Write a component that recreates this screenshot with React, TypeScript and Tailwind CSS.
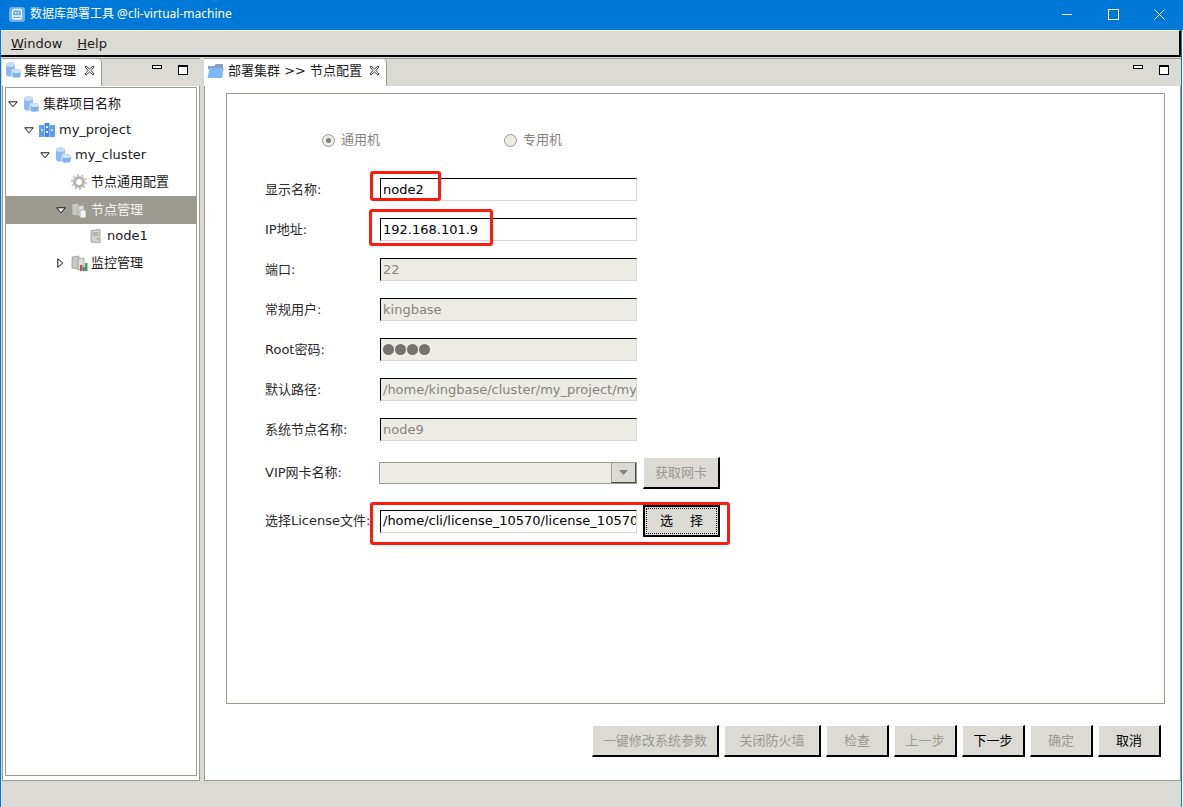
import React from 'react';

const cjk = "font-['DejaVu_Sans','Noto_Sans_CJK_SC',sans-serif]";

const AppIcon = () => (
  <svg width="16" height="15" viewBox="0 0 16 15" className="shrink-0">
    <rect x="0" y="0" width="16" height="15" rx="3" fill="#6db0f2" />
    <rect x="3.5" y="2.5" width="9" height="9.5" rx="2" fill="none" stroke="#fff" strokeWidth="1.3" />
    <rect x="6" y="5" width="1.2" height="1.2" fill="#fff" />
    <rect x="8.8" y="5" width="1.2" height="1.2" fill="#fff" />
    <path d="M3.5 9 H12.5" stroke="#fff" strokeWidth="1.2" />
  </svg>
);

const DbIcon = () => (
  <svg width="17" height="17" viewBox="0 0 17 17" className="shrink-0">
    <rect x="1" y="0.5" width="9" height="14" rx="3" fill="#8db9ee" />
    <ellipse cx="5.5" cy="2.8" rx="4.5" ry="2.2" fill="#c4dcf8" />
    <rect x="7" y="7" width="9" height="9" rx="2.5" fill="#7fb3ee" stroke="#fff" strokeWidth="0.7" />
    <ellipse cx="11.5" cy="9.2" rx="4" ry="1.8" fill="#d6e7fb" />
  </svg>
);

const ProjectIcon = () => (
  <svg width="16" height="16" viewBox="0 0 16 16" className="shrink-0">
    <rect x="0" y="3" width="5" height="12" fill="#5b9ff0" />
    <rect x="5.5" y="1" width="5" height="14" fill="#3f88e6" />
    <rect x="11" y="3" width="5" height="12" fill="#5b9ff0" />
    <rect x="7" y="4" width="2" height="2" fill="#e6f0fc" />
    <rect x="7" y="9" width="2" height="2" fill="#e6f0fc" />
    <rect x="2" y="7" width="1.5" height="2" fill="#e6f0fc" />
    <rect x="12.5" y="7" width="1.5" height="2" fill="#e6f0fc" />
  </svg>
);

const GearIcon = () => (
  <svg width="16" height="16" viewBox="0 0 16 16" className="shrink-0">
    <circle cx="8" cy="8" r="4.5" fill="none" stroke="#b5b5b1" strokeWidth="3" />
    <circle cx="8" cy="8" r="7" fill="none" stroke="#c6c6c2" strokeWidth="2" strokeDasharray="2.2 2.2" />
  </svg>
);

const ServerIcon = () => (
  <svg width="13" height="15" viewBox="0 0 13 15" className="shrink-0">
    <path d="M2 1.5 L11 0.5 V14 L2 13 Z" fill="#d2d2ce" stroke="#9a9a96" strokeWidth="0.8" />
    <path d="M3.5 4 H9.5 M3.5 6 H9.5" stroke="#8a8a84" strokeWidth="0.8" />
    <rect x="8" y="9" width="1.5" height="1.5" fill="#4caf50" />
  </svg>
);

const ServersIcon = ({ chart }: { chart?: boolean }) => (
  <svg width="17" height="17" viewBox="0 0 17 17" className="shrink-0">
    <path d="M1 2 L8 1 V14 L1 13 Z" fill="#c8c8c4" stroke="#96968f" strokeWidth="0.7" />
    <path d="M7 4 L13 3 V13 L7 15 Z" fill="#dcdcd8" stroke="#96968f" strokeWidth="0.7" />
    {chart ? (
      <>
        <rect x="9" y="10" width="2.5" height="6" fill="#d9463e" />
        <rect x="11.5" y="12" width="2.5" height="4" fill="#3f88e6" />
        <rect x="14" y="8" width="2.5" height="8" fill="#43a047" />
      </>
    ) : (
      <rect x="9" y="8" width="6" height="8" fill="#f3f3f1" stroke="#96968f" strokeWidth="0.7" />
    )}
  </svg>
);

const FolderIcon = () => (
  <svg width="17" height="16" viewBox="0 0 17 16" className="shrink-0">
    <path d="M1 3 H7 L9 1 H16 V6 H1 Z" fill="#7f9fc4" />
    <path d="M0.5 15 L2.5 5 H16.8 L15 15 Z" fill="#7db8f8" />
  </svg>
);

const ArrowDown = () => (
  <svg width="10" height="7" viewBox="0 0 10 7" className="shrink-0">
    <path d="M0.8 0.8 H9.2 L5 5.8 Z" fill="#fff" stroke="#111" strokeWidth="1" />
  </svg>
);

const ArrowRight = () => (
  <svg width="7" height="10" viewBox="0 0 7 10" className="shrink-0">
    <path d="M0.8 0.8 V9.2 L5.8 5 Z" fill="#fff" stroke="#111" strokeWidth="1" />
  </svg>
);

const TabClose = () => (
  <svg width="11" height="11" viewBox="0 0 11 11" className="shrink-0">
    <path d="M1 2 L2 1 L5.5 4 L9 1 L10 2 L7 5.5 L10 9 L9 10 L5.5 7 L2 10 L1 9 L4 5.5 Z" fill="#fff" stroke="#222" strokeWidth="0.9" />
  </svg>
);

const ViewButtons = () => (
  <div className="mb-[5px] flex items-start gap-[16px]">
    <div className="h-[4px] w-[10px] border border-black bg-white" />
    <div className="h-[10px] w-[10px] border border-black border-t-2 bg-white" />
  </div>
);

const TreeRow = ({ indent, h, toggle, icon, label, selected }: { indent: string; h: string; toggle?: React.ReactNode; icon: React.ReactNode; label: string; selected?: boolean }) => (
  <div className={`flex ${h} items-center ${indent} ${selected ? 'bg-[#9d9a92] text-[#f4f4f2]' : 'text-[#1a1a1a]'}`}>
    <div className="flex w-[15px] shrink-0 items-center justify-center pr-[2px]">{toggle}</div>
    <div className="flex w-[20px] shrink-0 items-center justify-center">{icon}</div>
    <span className="ml-[2px] whitespace-nowrap">{label}</span>
  </div>
);

const Field = ({ label, value, on, password }: { label: string; value?: string; on?: boolean; password?: boolean }) => (
  <div className="mb-[17px] flex items-center">
    <span className="w-[115px] shrink-0 whitespace-nowrap text-[#2a2a2a]">{label}</span>
    <div className={`flex h-[23px] w-[257px] items-center overflow-hidden border border-t-black border-l-black border-r-[#d6d4ce] border-b-[#d6d4ce] pl-[2px] ${on ? 'bg-white text-black' : 'bg-[#edebe6] text-[#85837d]'}`}>
      {password ? (
        <div className="flex gap-[1px]">
          <span className="h-[11px] w-[11px] rounded-full bg-[#747370]" />
          <span className="h-[11px] w-[11px] rounded-full bg-[#747370]" />
          <span className="h-[11px] w-[11px] rounded-full bg-[#747370]" />
          <span className="h-[11px] w-[11px] rounded-full bg-[#747370]" />
        </div>
      ) : (
        <span className="whitespace-nowrap">{value}</span>
      )}
    </div>
  </div>
);

const BarButton = ({ children, on, w }: { children: React.ReactNode; on?: boolean; w: string }) => (
  <div className={`flex h-[32px] ${w} items-center justify-center border-r-2 border-b-2 border-r-black border-b-black border-t border-l border-t-white border-l-white bg-[#dcdad5] ${on ? 'text-black' : 'text-[#9a9892]'}`}>
    {children}
  </div>
);

const Radio = ({ checked, label, w }: { checked?: boolean; label: string; w: string }) => (
  <div className={`flex items-center ${w}`}>
    <div className="flex h-[13px] w-[13px] items-center justify-center rounded-full border border-[#9a9892] bg-[#edebe6]">
      {checked && <div className="h-[5px] w-[5px] rounded-full bg-[#85837d]" />}
    </div>
    <span className="ml-[6px] text-[#85837d]">{label}</span>
  </div>
);

const RedBox = ({ className }: { className: string }) => (
  <div className={`pointer-events-none absolute rounded-[3px] border-[3px] border-[#fb1c10] ${className}`} />
);

export default function App() {
  return (
    <div className={`flex h-[807px] w-[1183px] flex-col overflow-hidden bg-white text-[13px] ${cjk}`}>
      {/* title bar */}
      <div className="flex h-[30px] shrink-0 items-center bg-[#0078d7] pb-[2px] pl-[9px] pr-[1px] text-white">
        <AppIcon />
        <span className="ml-[5px] whitespace-nowrap font-['Noto_Sans','Noto_Sans_CJK_SC',sans-serif] text-[12px]">数据库部署工具 @cli-virtual-machine</span>
        <div className="ml-auto flex items-center">
          <div className="flex w-[46px] justify-center"><div className="h-px w-[10px] bg-white" /></div>
          <div className="flex w-[46px] justify-center"><div className="h-[11px] w-[11px] border border-white" /></div>
          <div className="flex w-[46px] justify-center">
            <svg width="11" height="11" viewBox="0 0 11 11"><path d="M0.5 0.5 L10.5 10.5 M10.5 0.5 L0.5 10.5" stroke="#fff" strokeWidth="1" /></svg>
          </div>
        </div>
      </div>

      <div className="mr-[1px] flex min-h-0 flex-1 flex-col border-x border-[#0078d7] bg-[#dcdad5]">
        {/* menu bar */}
        <div className="flex h-[27px] shrink-0 items-center gap-[15px] border-t border-white border-b-2 border-b-black border-r-2 border-r-black pl-[10px] pt-[1px] text-[#1a1a1a]">
          <span><span className="underline">W</span>indow</span>
          <span><span className="underline">H</span>elp</span>
        </div>

        {/* panels */}
        <div className="flex min-h-0 flex-1 pl-[1px] pt-[1px]">
          {/* left view */}
          <div className="flex w-[198px] shrink-0 flex-col">
            <div className="flex h-[28px] shrink-0 items-center border-t border-t-[#9d9a92]">
              <div className="flex h-[28px] w-[100px] items-center rounded-tr-[4px] border-r border-[#9d9a92] bg-white pb-[4px] pl-[3px]">
                <DbIcon />
                <span className="ml-[2px] whitespace-nowrap text-[#1a1a1a]">集群管理</span>
                <span className="ml-[8px]"><TabClose /></span>
              </div>
              <div className="ml-[50px]"><ViewButtons /></div>
            </div>
            <div className="flex min-h-0 flex-1 flex-col border-x border-b border-[#9d9a92] bg-white px-[2px] pb-[4px] pt-[1px]">
              <div className="flex-1 border border-[#9d9a92] pt-[3px]">
                <TreeRow h="h-[26px]" indent="pl-0" toggle={<ArrowDown />} icon={<DbIcon />} label="集群项目名称" />
                <TreeRow h="h-[26px]" indent="pl-[16px]" toggle={<ArrowDown />} icon={<ProjectIcon />} label="my_project" />
                <TreeRow h="h-[25px]" indent="pl-[32px] pb-[1px]" toggle={<ArrowDown />} icon={<DbIcon />} label="my_cluster" />
                <TreeRow h="h-[28px]" indent="pl-[48px]" icon={<GearIcon />} label="节点通用配置" />
                <TreeRow h="h-[28px]" indent="pl-[48px]" toggle={<ArrowDown />} icon={<ServersIcon />} label="节点管理" selected />
                <TreeRow h="h-[26px]" indent="pl-[64px] pb-[2px]" icon={<ServerIcon />} label="node1" />
                <TreeRow h="h-[28px]" indent="pl-[48px] pb-[2px]" toggle={<ArrowRight />} icon={<ServersIcon chart />} label="监控管理" />
              </div>
            </div>
          </div>

          {/* editor */}
          <div className="ml-[4px] flex min-w-0 flex-1 flex-col">
            <div className="flex h-[28px] shrink-0 items-center justify-between border-t border-t-[#9d9a92] pr-[12px]">
              <div className="flex h-[28px] w-[183px] items-center rounded-tr-[4px] border-r border-[#9d9a92] bg-white pb-[4px] pl-[3px]">
                <FolderIcon />
                <span className="ml-[4px] whitespace-nowrap text-[#1a1a1a]">部署集群 &gt;&gt; 节点配置</span>
                <span className="ml-[7px]"><TabClose /></span>
              </div>
              <ViewButtons />
            </div>
            <div className="flex min-h-0 flex-1 flex-col border-x border-b border-[#9d9a92] bg-white pl-[21px] pr-[15px] pt-[7px]">
              <div className="relative h-[611px] shrink-0 border border-[#9d9a92] pl-[38px]">
                <div className="flex h-[84px] items-center pl-[57px] pt-[8px]">
                  <Radio checked label="通用机" w="w-[182px]" />
                  <Radio label="专用机" w="w-[100px]" />
                </div>
                <Field label="显示名称:" value="node2" on />
                <Field label="IP地址:" value="192.168.101.9" on />
                <Field label="端口:" value="22" />
                <Field label="常规用户:" value="kingbase" />
                <Field label="Root密码:" password />
                <Field label="默认路径:" value="/home/kingbase/cluster/my_project/my" />
                <Field label="系统节点名称:" value="node9" />
                <div className="-mt-[1px] mb-[16px] flex items-center">
                  <span className="w-[114px] shrink-0 whitespace-nowrap text-[#2a2a2a]">VIP网卡名称:</span>
                  <div className="flex h-[22px] w-[258px] items-center justify-end border border-[#9d9a92] bg-[#edebe6]">
                    <div className="flex h-[20px] w-[25px] items-center justify-center border-l border-r border-b border-l-[#9d9a92] border-r-[#4a4a46] border-b-[#4a4a46] bg-[#dcdad5]">
                      <svg width="9" height="5" viewBox="0 0 9 5"><path d="M0 0 H9 L4.5 5 Z" fill="#85837d" /></svg>
                    </div>
                  </div>
                  <div className="ml-[6px] flex h-[32px] w-[77px] items-center justify-center border-t border-l border-t-white border-l-white border-r-2 border-b-2 border-r-black border-b-black bg-[#dcdad5] text-[#9a9892]">获取网卡</div>
                </div>
                <div className="flex items-center">
                  <span className="w-[115px] shrink-0 whitespace-nowrap text-[#2a2a2a]">选择License文件:</span>
                  <div className="flex h-[23px] w-[257px] items-center overflow-hidden border border-t-black border-l-black border-r-[#d6d4ce] border-b-[#d6d4ce] bg-white pl-[2px] text-black">
                    <span className="whitespace-nowrap">/home/cli/license_10570/license_10570</span>
                  </div>
                  <div className="ml-[6px] flex h-[32px] w-[77px] items-center justify-center border-2 border-black bg-[#dcdad5] p-[1px] text-black">
                    <div className="flex h-full w-full items-center justify-center gap-[17px] border border-dotted border-black">
                      <span>选</span>
                      <span>择</span>
                    </div>
                  </div>
                </div>
                <RedBox className="left-[143px] top-[77px] h-[30px] w-[71px]" />
                <RedBox className="left-[142px] top-[115px] h-[37px] w-[124px]" />
                <RedBox className="left-[143px] top-[408px] h-[43px] w-[360px]" />
              </div>
              <div className="mt-[21px] flex justify-end gap-[5px] pr-[4px]">
                <BarButton w="w-[127px]">一键修改系统参数</BarButton>
                <BarButton w="w-[97px]">关闭防火墙</BarButton>
                <BarButton w="w-[63px]">检查</BarButton>
                <BarButton w="w-[63px]">上一步</BarButton>
                <BarButton w="w-[63px]" on>下一步</BarButton>
                <BarButton w="w-[63px]">确定</BarButton>
                <BarButton w="w-[63px]" on>取消</BarButton>
              </div>
            </div>
          </div>
        </div>

        {/* status bar */}
        <div className="h-[26px] shrink-0 bg-[#dcdad5]" />
      </div>
    </div>
  );
}
